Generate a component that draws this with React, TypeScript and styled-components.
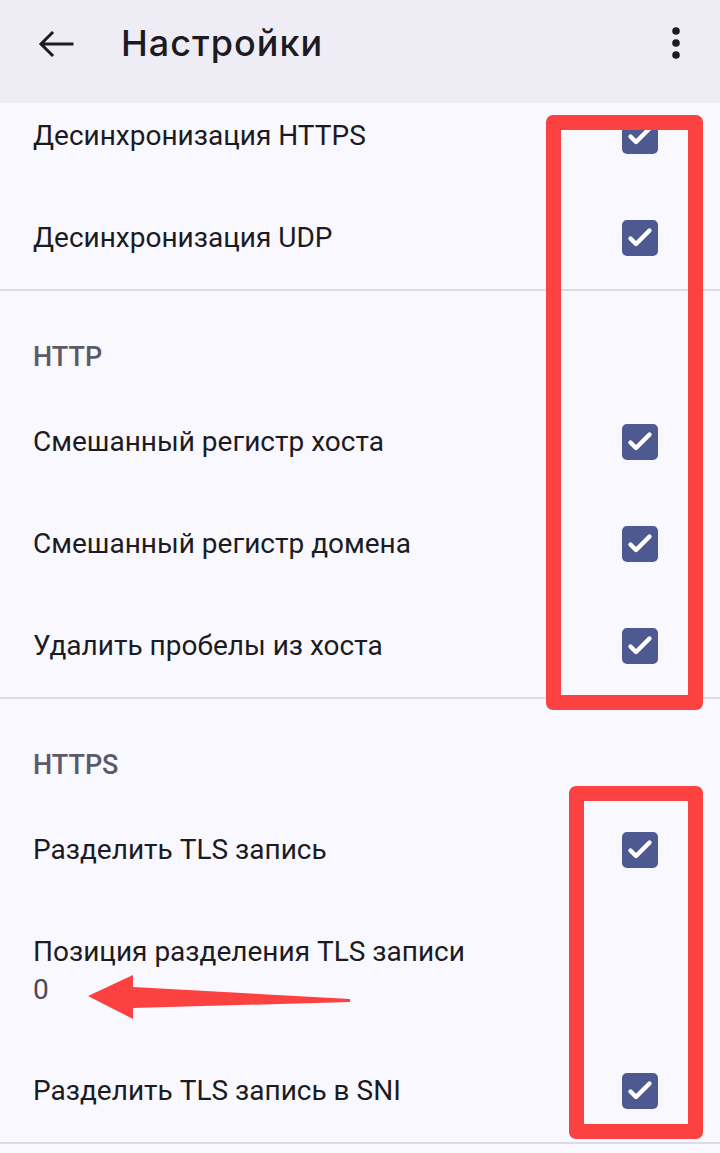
import React from "react";
import styled, { createGlobalStyle } from "styled-components";

const GlobalStyle = createGlobalStyle`
  html, body {
    margin: 0;
    padding: 0;
    background: #f9f8fe;
  }
  body {
    font-family: Roboto, "Noto Sans", "Liberation Sans", sans-serif;
    color: #1c1b22;
  }
`;

const Screen = styled.div`
  position: relative;
  width: 720px;
  height: 1153px;
  overflow: hidden;
  background: #f9f8fe;
  display: flex;
  flex-direction: column;
`;

const AppBar = styled.header`
  position: relative;
  z-index: 2;
  flex: 0 0 103px;
  display: flex;
  align-items: flex-start;
  background: #eeedf5;
  padding: 0 36px 0 38px;
`;

const BarRow = styled.div`
  height: 86px;
  flex: 1;
  display: flex;
  align-items: center;
`;

const IconButton = styled.button`
  border: 0;
  background: none;
  padding: 0;
  display: flex;
  align-items: center;
  justify-content: center;
  color: #1c1b22;
  cursor: pointer;
`;

const Title = styled.h1`
  margin: 0 0 0 47px;
  flex: 1;
  font-family: Inter, Roboto, sans-serif;
  font-size: 36px;
  font-weight: 500;
  letter-spacing: 1px;
  color: #1c1b22;
`;

const Scroll = styled.main`
  flex: 1;
  overflow: hidden;
`;

const List = styled.div`
  margin-top: -18px;
`;

const Divider = styled.div`
  height: 2px;
  background: #dcdbe3;
`;

const Category = styled.div`
  padding: 50px 33px 18px;
  line-height: 32px;
  font-size: 27px;
  font-weight: 500;
  color: #5b5a68;
`;

const Row = styled.div<{ $tall?: boolean }>`
  min-height: ${(p) => (p.$tall ? "139px" : "102px")};
  display: flex;
  align-items: center;
  padding: 0 62px 0 33px;
  box-sizing: border-box;
`;

const Texts = styled.div`
  flex: 1;
  display: flex;
  flex-direction: column;
`;

const Label = styled.span`
  font-size: 28px;
  line-height: 38px;
  color: #1c1b22;
`;

const Summary = styled.span`
  font-size: 28px;
  line-height: 38px;
  color: #4a4955;
`;

const Box = styled.span`
  width: 36px;
  height: 36px;
  border-radius: 5px;
  background: #4d5990;
  display: flex;
  align-items: center;
  justify-content: center;
  flex: 0 0 auto;
`;

const Mark = styled.div<{ $l: number; $t: number; $w: number; $h: number }>`
  position: absolute;
  left: ${(p) => p.$l}px;
  top: ${(p) => p.$t}px;
  width: ${(p) => p.$w}px;
  height: ${(p) => p.$h}px;
  box-sizing: border-box;
  border: 15px solid #fc4141;
  border-radius: 7px;
  z-index: 3;
`;

const Arrow = styled.svg`
  position: absolute;
  left: 84px;
  top: 970px;
  z-index: 3;
`;

function Check() {
  return (
    <Box>
      <svg width="36" height="36" viewBox="0 0 36 36">
        <polyline
          points="8.5,18.5 14,24 27.5,10.5"
          fill="none"
          stroke="#fff"
          strokeWidth="4.4"
          strokeLinecap="round"
          strokeLinejoin="round"
        />
      </svg>
    </Box>
  );
}

function Pref({ label, summary, checked }: { label: string; summary?: string; checked?: boolean }) {
  return (
    <Row $tall={!!summary}>
      <Texts>
        <Label>{label}</Label>
        {summary && <Summary>{summary}</Summary>}
      </Texts>
      {checked && <Check />}
    </Row>
  );
}

export default function App() {
  return (
    <>
      <GlobalStyle />
      <Screen>
        <AppBar>
          <BarRow>
            <IconButton aria-label="Назад">
              <svg width="36" height="36" viewBox="0 0 36 36">
                <path
                  d="M34 19H3.5M14 8L3 19l11 11"
                  fill="none"
                  stroke="#1c1b22"
                  strokeWidth="3"
                  strokeLinecap="square"
                />
              </svg>
            </IconButton>
            <Title>Настройки</Title>
            <IconButton aria-label="Меню">
              <svg width="16" height="40" viewBox="0 0 16 40">
                <circle cx="8" cy="8" r="3.8" fill="#1c1b22" />
                <circle cx="8" cy="20" r="3.8" fill="#1c1b22" />
                <circle cx="8" cy="32" r="3.8" fill="#1c1b22" />
              </svg>
            </IconButton>
          </BarRow>
        </AppBar>
        <Scroll>
          <List>
            <Pref label="Десинхронизация HTTPS" checked />
            <Pref label="Десинхронизация UDP" checked />
            <Divider />
            <Category>HTTP</Category>
            <Pref label="Смешанный регистр хоста" checked />
            <Pref label="Смешанный регистр домена" checked />
            <Pref label="Удалить пробелы из хоста" checked />
            <Divider />
            <Category>HTTPS</Category>
            <Pref label="Разделить TLS запись" checked />
            <Pref label="Позиция разделения TLS записи" summary="0" />
            <Pref label="Разделить TLS запись в SNI" checked />
            <Divider />
          </List>
        </Scroll>
        <Mark $l={546} $t={115} $w={157} $h={595} />
        <Mark $l={569} $t={786} $w={134} $h={353} />
        <Arrow width="270" height="56" viewBox="0 0 270 56">
          <polygon
            points="4,26 49,5 49,17 266,29 266,32 49,38 49,49"
            fill="#fc4141"
            strokeLinejoin="round"
          />
        </Arrow>
      </Screen>
    </>
  );
}
